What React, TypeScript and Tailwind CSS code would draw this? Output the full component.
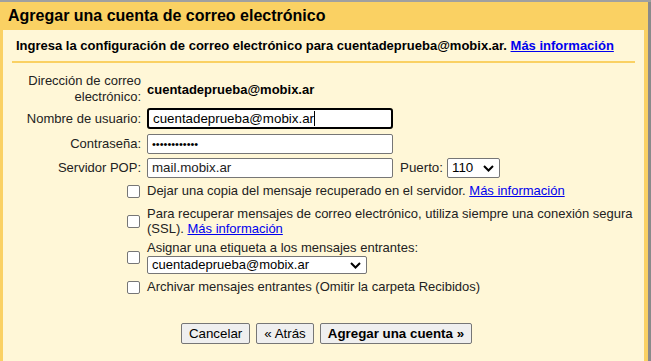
import React from 'react';

function Chevron() {
    return (
        <svg width="11" height="7" viewBox="0 0 11 7" className="shrink-0">
            <path d="M1 1l4.5 4.5L10 1" fill="none" stroke="#000" strokeWidth="2" />
        </svg>
    );
}

function Checkbox() {
    return <span className="block w-[13px] h-[13px] shrink-0 border border-[#767676] rounded-[2px] bg-white" />;
}

function Link({ children }: { children: React.ReactNode }) {
    return <a className="text-[#0000ee] underline cursor-pointer">{children}</a>;
}

export default function App() {
    return (
        <div className="w-[651px] h-[361px] overflow-hidden bg-[#fff7d7] border-t-2 border-[#a0a0a0] text-[13px] text-[#222] font-['Liberation_Sans',Arial,sans-serif]">
            <div className="flex h-full">
                <div className="flex-1 flex flex-col border-l-[3px] border-r-[4px] border-[#fad163]">
                    <div className="h-[28px] bg-[#fad163] flex items-center pl-[5px]">
                        <h1 className="text-[16px] font-bold text-black leading-none">Agregar una cuenta de correo electrónico</h1>
                    </div>
                    <div className="px-[9px]">
                        <div className="h-[33px] flex items-center pl-[4px] font-bold text-black border-b-2 border-[#fad163]">
                            Ingresa la configuración de correo electrónico para cuentadeprueba@mobix.ar.&nbsp;<Link>Más información</Link>
                        </div>
                    </div>

                    <div className="grid grid-cols-[138px_1fr] gap-x-[6px] mt-[10px] items-center">
                        <div className="text-right leading-[16px]">Dirección de correo<br />electrónico:</div>
                        <div className="font-bold text-black pt-[2px]">cuentadeprueba@mobix.ar</div>

                        <div className="text-right mt-[3px]">Nombre de usuario:</div>
                        <div className="mt-[3px]">
                            <div className="w-[246px] h-[21px] border-2 border-black rounded-[3px] bg-white flex items-center pl-[4px] text-[13.333px] text-black">
                                cuentadeprueba@mobix.ar<span className="w-px h-[15px] bg-black" />
                            </div>
                        </div>

                        <div className="text-right mt-[5px]">Contraseña:</div>
                        <div className="mt-[5px]">
                            <div className="w-[246px] h-[20px] border border-[#767676] rounded-[2px] bg-white flex items-center pl-[4px] text-[11px] text-black">
                                ••••••••••••
                            </div>
                        </div>

                        <div className="text-right mt-[4px]">Servidor POP:</div>
                        <div className="mt-[4px] flex items-center">
                            <div className="w-[246px] h-[20px] border border-[#767676] rounded-[2px] bg-white flex items-center pl-[4px] text-[13.333px] text-[#222]">
                                mail.mobix.ar
                            </div>
                            <span className="ml-[7px] text-[13.333px]">Puerto:</span>
                            <div className="ml-[4px] w-[53px] h-[20px] border border-[#767676] rounded-[2px] bg-white flex items-center justify-between pl-[4px] pr-[5px] text-[13.333px] text-black">
                                110
                                <Chevron />
                            </div>
                        </div>
                    </div>

                    <div className="pl-[124px] mt-[3px] flex flex-col">
                        <div className="flex items-center gap-[7px] h-[20px]">
                            <Checkbox />
                            <span>Dejar una copia del mensaje recuperado en el servidor. <Link>Más información</Link></span>
                        </div>
                        <div className="flex items-center gap-[7px] mt-[5px]">
                            <Checkbox />
                            <span className="leading-[15px]">Para recuperar mensajes de correo electrónico, utiliza siempre una conexión segura<br />(SSL). <Link>Más información</Link></span>
                        </div>
                        <div className="flex items-center gap-[7px] mt-[4px]">
                            <Checkbox />
                            <div className="flex flex-col">
                                <span className="leading-[16px]">Asignar una etiqueta a los mensajes entrantes:</span>
                                <div className="w-[220px] h-[18px] border border-[#767676] rounded-[2px] bg-white flex items-center justify-between pl-[4px] pr-[5px] text-[13px] text-black">
                                    cuentadeprueba@mobix.ar
                                    <Chevron />
                                </div>
                            </div>
                        </div>
                        <div className="flex items-center gap-[7px] mt-[3px] h-[20px]">
                            <Checkbox />
                            <span>Archivar mensajes entrantes (Omitir la carpeta Recibidos)</span>
                        </div>
                    </div>

                    <div className="flex justify-center gap-[6px] mt-[26px] pl-[6px] text-[13.333px] text-black">
                        <button className="h-[21px] px-[7px] bg-[#efefef] border border-[#767676] rounded-[2px]">Cancelar</button>
                        <button className="h-[21px] px-[7px] bg-[#efefef] border border-[#767676] rounded-[2px]">« Atrás</button>
                        <button className="h-[21px] px-[7px] bg-[#efefef] border border-[#767676] rounded-[2px] font-bold">Agregar una cuenta »</button>
                    </div>
                </div>
                <div className="w-[3px] h-full bg-[#8a8a8a]" />
            </div>
        </div>
    );
}
